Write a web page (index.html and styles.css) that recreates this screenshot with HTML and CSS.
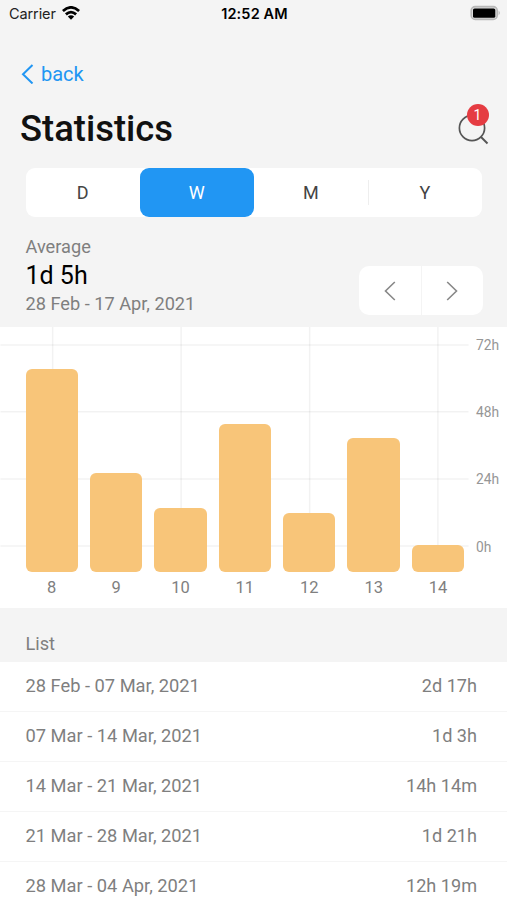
FILE: index.html
```html
<!DOCTYPE html>
<html lang="en">
	<head>
		<meta charset="utf-8" />
		<title>Statistics</title>
		<link rel="stylesheet" href="styles.css">
	</head>
	<body>
		<div class="statusbar">
			<div class="carrier">
				<span>Carrier</span>
				<svg width="18" height="14" viewBox="0 0 18 14" fill="none" stroke="#000" stroke-width="2.8">
					<path d="M.9 5Q9-2.2 17.1 5" />
					<path d="M3.9 8.4Q9 3.9 14.1 8.4" />
					<path d="M9 13.8L5.8 10.6Q9 8 12.2 10.6Z" fill="#000" stroke="none" />
				</svg>
			</div>
			<span class="time">12:52 AM</span>
			<svg class="battery" width="31" height="16" viewBox="0 0 31 16">
				<rect x="1.2" y="1.6" width="26" height="12.8" rx="4" fill="#ddd" stroke="#b8b8b8" stroke-width="1.6" />
				<rect x="3" y="3.4" width="22.3" height="9.4" rx="1.6" fill="#000" />
				<path d="M28.6 5.6Q31 8 28.6 10.4Z" fill="#b5b5b5" />
			</svg>
		</div>

		<a class="back" href="#">
			<svg width="13" height="20" viewBox="0 0 13 20" fill="none" stroke="#2196f3" stroke-width="2"><path d="M11.5 1L2 10.3L11.5 19.5" /></svg>
			<span>back</span>
		</a>

		<div class="header">
			<h1>Statistics</h1>
			<div class="search">
				<svg width="32" height="32" viewBox="0 0 32 32" fill="none" stroke="#555" stroke-width="1.7">
					<circle cx="14" cy="14" r="12.6" />
					<path d="M23 23L29.5 29.5" stroke-width="2" />
				</svg>
				<span class="badge">1</span>
			</div>
		</div>

		<div class="tabs">
			<span>D</span>
			<span class="active">W</span>
			<span>M</span>
			<span class="line">Y</span>
		</div>

		<div class="summary">
			<div class="average">
				<p>Average</p>
				<p class="value">1d 5h</p>
				<p>28 Feb - 17 Apr, 2021</p>
			</div>
			<div class="pager">
				<span><svg width="12" height="20" viewBox="0 0 12 20" fill="none" stroke="#888" stroke-width="1.6"><path d="M10.8 1L1.5 10L10.8 19" /></svg></span>
				<span><svg width="12" height="20" viewBox="0 0 12 20" fill="none" stroke="#888" stroke-width="1.6"><path d="M1.2 1L10.5 10L1.2 19" /></svg></span>
			</div>
		</div>

		<div class="chart">
			<div class="plot">
				<svg class="grid" width="469" height="245" viewBox="0 0 469 245" fill="none" stroke="#000" stroke-opacity=".05" stroke-width="1.5">
					<path d="M0 18H469M0 85H469M0 152.2H469M0 219.4H469" />
					<path d="M52.3 0V245M181 0V245M309.8 0V245M438.3 0V245" />
				</svg>
				<div class="bars">
					<div class="bar" style="height:203px"></div>
					<div class="bar" style="height:99px"></div>
					<div class="bar" style="height:63.5px"></div>
					<div class="bar" style="height:148px"></div>
					<div class="bar" style="height:58.5px"></div>
					<div class="bar" style="height:133.5px"></div>
					<div class="bar" style="height:27px"></div>
				</div>
			</div>
			<div class="hours">
				<span>72h</span>
				<span>48h</span>
				<span>24h</span>
				<span>0h</span>
			</div>
			<div class="weeks">
				<span>8</span>
				<span>9</span>
				<span>10</span>
				<span>11</span>
				<span>12</span>
				<span>13</span>
				<span>14</span>
			</div>
		</div>

		<h2>List</h2>
		<div class="list">
			<div class="row"><span>28 Feb - 07 Mar, 2021</span><span class="total">2d 17h</span></div>
			<div class="row"><span>07 Mar - 14 Mar, 2021</span><span class="total">1d 3h</span></div>
			<div class="row"><span>14 Mar - 21 Mar, 2021</span><span class="total">14h 14m</span></div>
			<div class="row"><span>21 Mar - 28 Mar, 2021</span><span class="total">1d 21h</span></div>
			<div class="row"><span>28 Mar - 04 Apr, 2021</span><span class="total">12h 19m</span></div>
		</div>
	</body>
</html>
```
FILE: styles.css
```css
* {box-sizing:border-box;}
body {margin:0;width:507px;height:900px;overflow:hidden;background:#f4f4f4;font:18px Roboto, sans-serif;color:#7f7f7f;}
h1, h2, p {margin:0;font-weight:normal;}
svg {display:block;}

.statusbar {display:grid;grid-template-columns:1fr auto 1fr;align-items:center;height:26px;padding:0 6px 0 9px;font:14.5px Inter, sans-serif;color:#222;}
.carrier {display:flex;align-items:center;gap:6px;letter-spacing:-.1px;}
.time {padding-right:1px;font-weight:600;letter-spacing:.15px;color:#000;}
.battery {justify-self:end;}

.back {display:flex;align-items:center;gap:7px;height:28px;margin:34px 0 0 21px;font-size:20px;color:#2196f3;text-decoration:none;}
.header {display:flex;justify-content:space-between;height:49px;margin-top:17px;padding:0 17px 0 20px;}
.header h1 {font-size:36.4px;font-weight:500;line-height:47px;color:#111;}
.search {position:relative;width:32px;height:32px;margin-top:9px;}
.badge {position:absolute;left:8.5px;top:-10.5px;width:22px;height:22px;border-radius:50%;background:#e53c42;color:#fff;font-size:14px;line-height:22px;text-align:center;}

.tabs {display:flex;height:49px;margin:14px 25px 0 25.5px;background:#fff;border-radius:9px;color:#444;}
.tabs span {flex:1;display:flex;align-items:center;justify-content:center;}
.tabs .active {background:#2196f3;color:#fff;border-radius:9px;}
.tabs .line {background:linear-gradient(#eee, #eee) left center / 1px 25px no-repeat;}

.summary {display:flex;justify-content:space-between;height:110px;padding:18px 24px 0 25.5px;}
.average p {font-size:18.2px;line-height:24px;}
.average .value {font-size:25px;line-height:33px;color:#000;}
.pager {display:flex;width:124px;height:49px;margin-top:31px;background:#fff;border-radius:10px;}
.pager span {flex:1;display:flex;align-items:center;justify-content:center;}
.pager span + span {border-left:1px solid #f4f4f4;}

.chart {display:grid;grid-template-columns:469px 38px;grid-template-rows:244.5px 36.5px;background:#fff;}
.plot {display:grid;}
.grid, .bars {grid-area:1 / 1;}
.grid {height:244.5px;}
.bars {display:flex;align-items:flex-end;gap:12px;padding-left:25.5px;}
.bar {width:52.4px;background:#f8c579;border-radius:6px;}
.hours {display:flex;flex-direction:column;height:244px;padding:1px 0 0 7px;font-size:13.8px;color:#969696;}
.hours span {flex:none;height:67.2px;line-height:34px;}
.weeks {display:flex;gap:12px;padding-left:25.5px;font-size:16.5px;line-height:32px;text-align:center;}
.weeks span {width:52.4px;}

h2 {height:53.5px;padding:17.5px 25.5px 0;font-size:18.2px;line-height:36px;}
.list {background:#fff;}
.row {display:flex;justify-content:space-between;height:50px;padding:0 30px 0 25.5px;font-size:18.3px;line-height:47.5px;border-bottom:1.5px solid #f5f5f5;}
.total {font-size:18.1px;}
```
